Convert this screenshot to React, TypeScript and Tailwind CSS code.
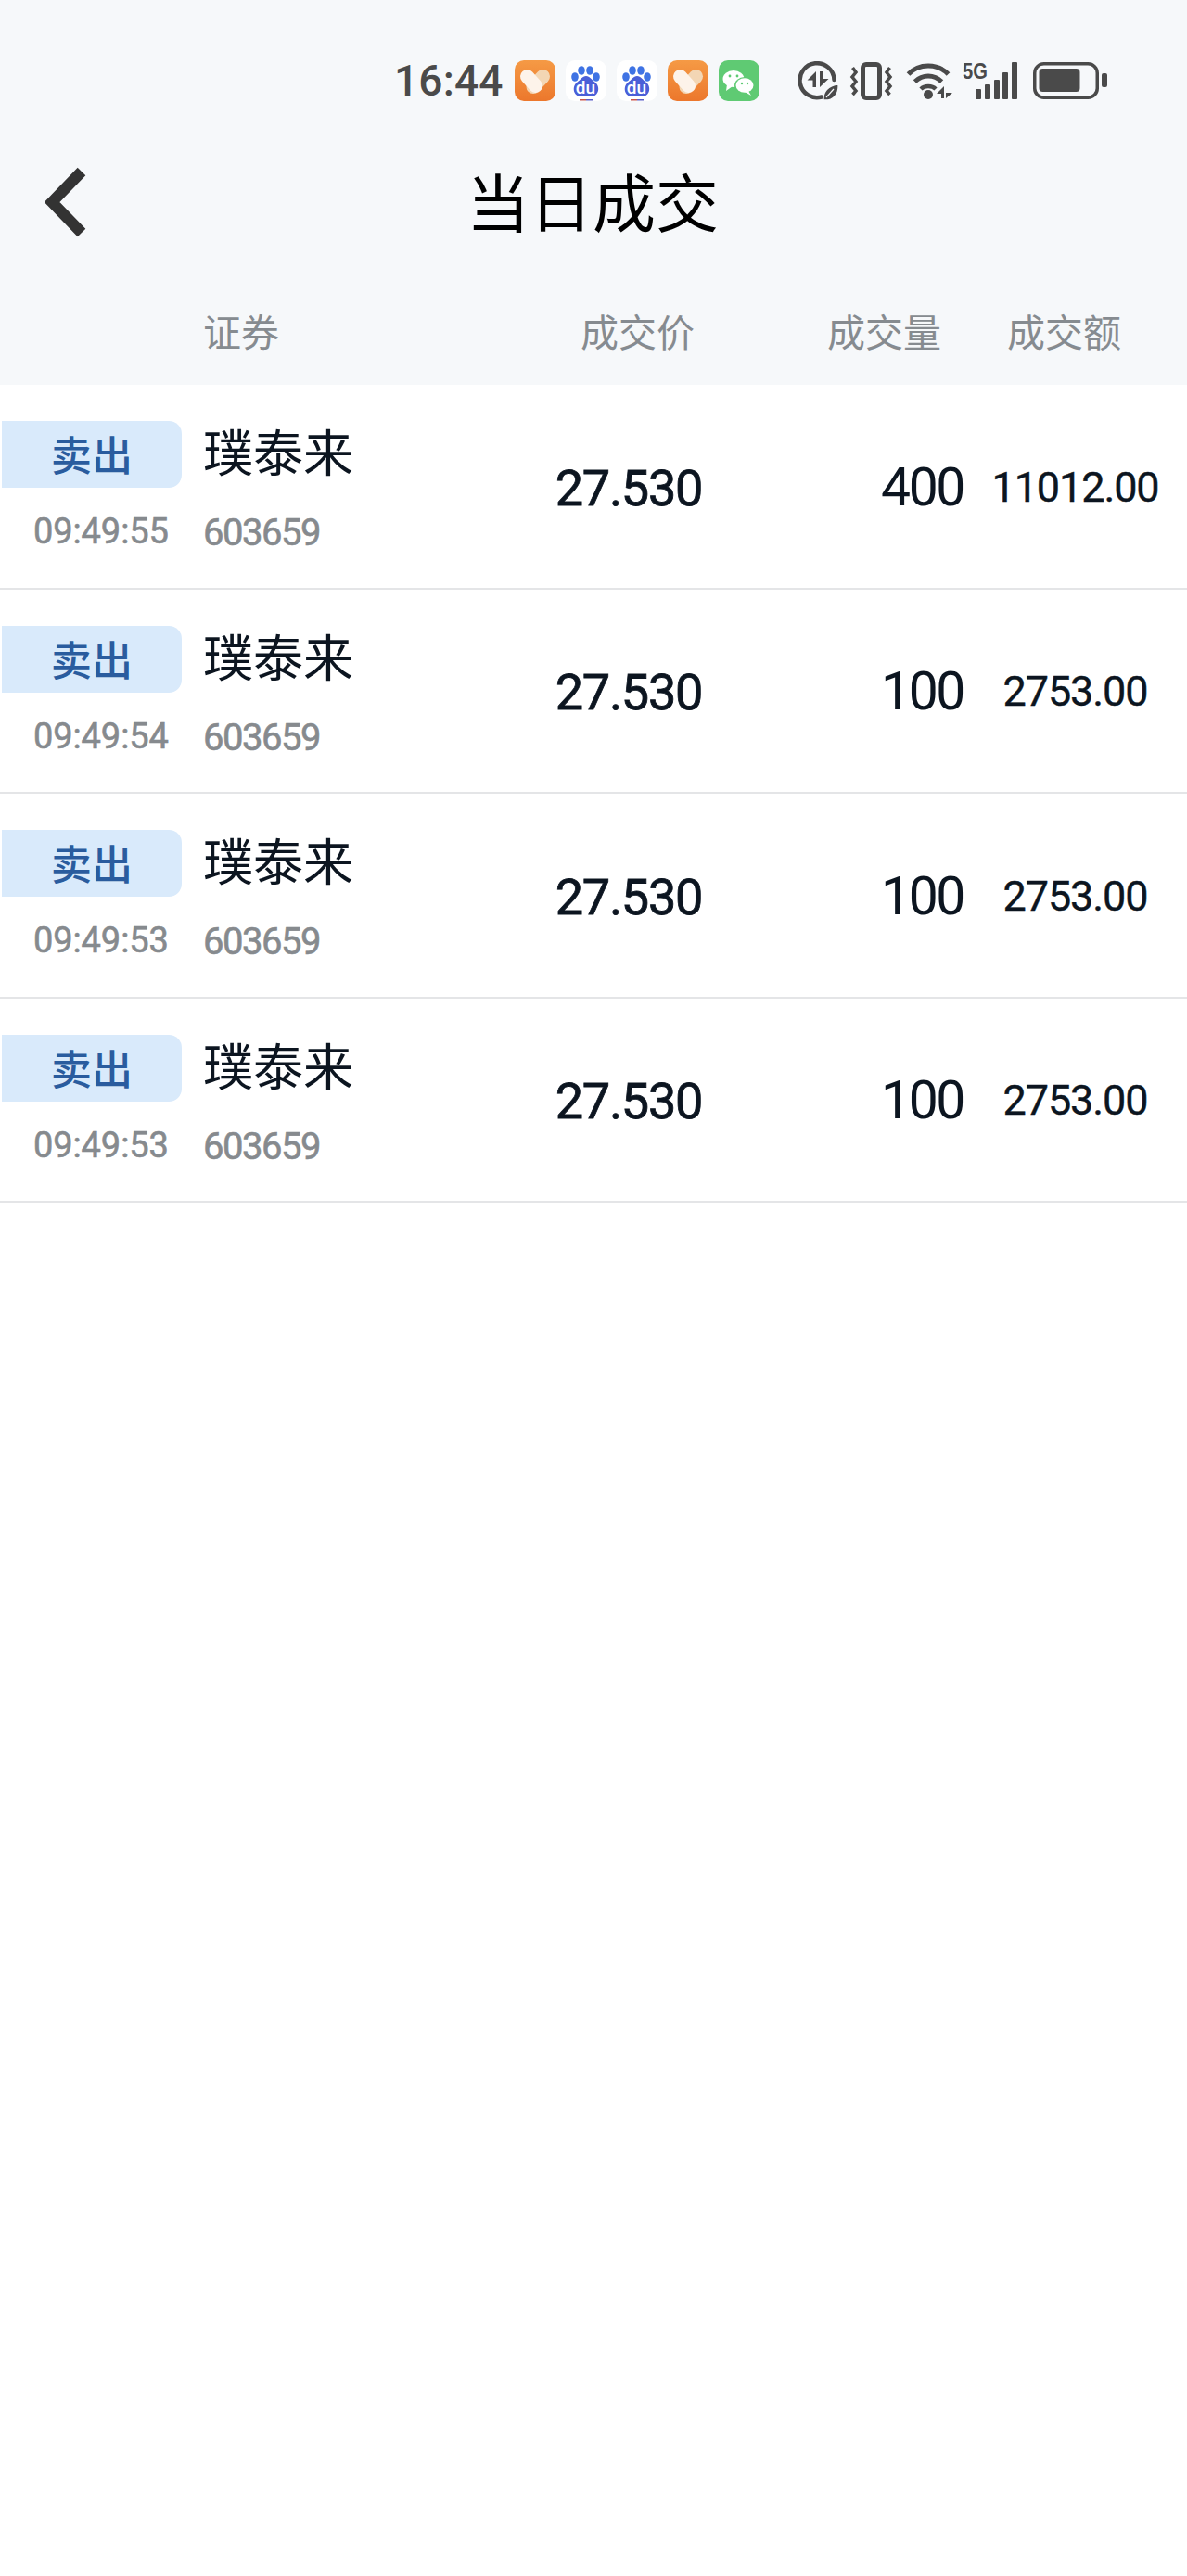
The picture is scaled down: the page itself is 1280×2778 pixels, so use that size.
const cjk = "font-['Noto_Sans_CJK_SC','Noto_Sans',sans-serif]";
const num = "font-['Roboto','Liberation_Sans',sans-serif]";

const trades = [
  { time: "09:49:55", qty: "400", amount: "11012.00" },
  { time: "09:49:54", qty: "100", amount: "2753.00" },
  { time: "09:49:53", qty: "100", amount: "2753.00" },
  { time: "09:49:53", qty: "100", amount: "2753.00" },
];

function HeartApp() {
  return (
    <svg width="44" height="44" viewBox="0 0 44 44" fill="none">
      <defs>
        <linearGradient id="orangeBg" x1="0" y1="0" x2="0" y2="1">
          <stop offset="0" stopColor="#f59a45" />
          <stop offset="1" stopColor="#ec772c" />
        </linearGradient>
      </defs>
      <rect width="44" height="44" rx="10" fill="url(#orangeBg)" />
      <path d="M30.500 17.500 L20 28.500" stroke="#f3d6b4" strokeWidth="15" strokeLinecap="round" />
      <path d="M13.500 17.500 L22.500 27.500" stroke="#fdf3ea" strokeWidth="15" strokeLinecap="round" />
    </svg>
  );
}

function BaiduApp() {
  return (
    <svg width="44" height="44" viewBox="0 0 44 44">
      <rect width="44" height="44" rx="10" fill="#ffffff" />
      <ellipse cx="17" cy="11" rx="3.800" ry="4.800" fill="#3f73e4" />
      <ellipse cx="26" cy="11" rx="3.800" ry="4.800" fill="#3f73e4" />
      <ellipse cx="10" cy="18" rx="3.800" ry="4.800" fill="#3f73e4" />
      <ellipse cx="33" cy="18" rx="3.800" ry="4.800" fill="#3f73e4" />
      <path d="M22 17 C26 17 28 21 32 24 C38 29 35 39 28 39 L16 39 C9 39 6 29 12 24 C16 21 18 17 22 17 Z" fill="#4a5fd8" />
      <text x="21.500" y="36" textAnchor="middle" fontSize="19" fontWeight="500" fill="#ffffff" fontFamily="Roboto, sans-serif">du</text>
      <rect x="15" y="42" width="7" height="1.500" fill="#c9544a" />
      <rect x="22" y="42" width="7" height="1.500" fill="#5a5fc8" />
    </svg>
  );
}

function WechatApp() {
  return (
    <svg width="44" height="44" viewBox="0 0 44 44">
      <rect width="44" height="44" rx="10" fill="#5fca73" />
      <ellipse cx="16" cy="20" rx="11.500" ry="9" fill="#ffffff" />
      <path d="M9 26 L8 33 L15 28 Z" fill="#ffffff" />
      <ellipse cx="28" cy="27" rx="11" ry="9" fill="#5fca73" />
      <ellipse cx="28" cy="27" rx="9.500" ry="7.800" fill="#ffffff" />
      <path d="M32 33 L35 38 L28 34 Z" fill="#ffffff" />
      <circle cx="12" cy="17" r="1.400" fill="#5fca73" />
      <circle cx="20" cy="17" r="1.400" fill="#5fca73" />
      <circle cx="25" cy="25" r="1.200" fill="#5fca73" />
      <circle cx="31" cy="25" r="1.200" fill="#5fca73" />
    </svg>
  );
}

function DataSaver() {
  return (
    <svg width="44" height="43" viewBox="0 0 44 43" fill="none">
      <path d="M25 38.500 A18.500 18.500 0 1 1 38.500 20" stroke="#4a4a4a" strokeWidth="4.500" strokeLinecap="round" />
      <path d="M19 11 V28 H15.500 V20.500 H9.500 Z" fill="#4a4a4a" />
      <path d="M23 11 H26.500 V19 H32.500 L23 28 Z" fill="#4a4a4a" />
      <path d="M27 42 C26 33 32 26 43 25 C44 35 38 43 27 42 Z" fill="#4a4a4a" stroke="#f6f8fa" strokeWidth="1.500" />
      <path d="M30 39 L38 30" stroke="#f6f8fa" strokeWidth="1.200" />
    </svg>
  );
}

function Vibrate() {
  return (
    <svg width="47" height="41" viewBox="0 0 47 41" fill="none" stroke="#4a4a4a">
      <rect x="14.500" y="2.500" width="18" height="36" rx="3.500" strokeWidth="5" />
      <path d="M3.500 6 L7 11 L3 16 L7 21 L3 26 L7 31 L3.500 35" strokeWidth="3.500" />
      <path d="M43.500 6 L40 11 L44 16 L40 21 L44 26 L40 31 L43.500 35" strokeWidth="3.500" />
    </svg>
  );
}

function Wifi() {
  return (
    <svg width="52" height="40" viewBox="0 0 52 40" fill="none">
      <path d="M2.500 13 C14 1 34 1 45.500 13" stroke="#4a4a4a" strokeWidth="5" />
      <path d="M9.500 21 C18 13 30 13 38.500 21" stroke="#4a4a4a" strokeWidth="5" />
      <path d="M16 29 C20 25 28 25 32 29" stroke="#4a4a4a" strokeWidth="4.500" />
      <circle cx="24" cy="35" r="5" fill="#4a4a4a" />
      <path d="M41 26 V39 H38 V34 H33 Z" fill="#4a4a4a" />
      <path d="M43 26 V39 L50 33 H43 Z" fill="#4a4a4a" />
    </svg>
  );
}

function Signal() {
  return (
    <div className="relative h-[40px] w-[60px]">
      <span className="absolute left-0 top-[-2px] origin-left scale-x-[0.84] font-['Liberation_Sans',sans-serif] text-[24px] font-bold leading-none text-[#4a4a4a]">
        5G
      </span>
      <svg className="absolute left-0 top-0" width="60" height="40" viewBox="0 0 60 40" fill="#4a4a4a">
        <rect x="14" y="29" width="6" height="11" rx="1" />
        <rect x="24" y="24" width="6" height="16" rx="1" />
        <rect x="34" y="19" width="6" height="21" rx="1" />
        <rect x="43" y="11" width="6" height="29" rx="1" />
        <rect x="53" y="0" width="6" height="40" rx="1" />
      </svg>
    </div>
  );
}

function Battery() {
  return (
    <svg width="80" height="40" viewBox="0 0 80 40" fill="none">
      <rect x="1.750" y="1.750" width="67.500" height="36.500" rx="10" stroke="#4a4a4a" strokeWidth="3.500" />
      <rect x="6.500" y="7" width="44" height="25" rx="4" fill="#4a4a4a" />
      <rect x="74" y="12" width="6" height="15" rx="2" fill="#4a4a4a" />
    </svg>
  );
}

function StatusBar() {
  return (
    <div className="flex h-[174px] items-center pl-[425px]">
      <span className={`${num} w-[130px] text-[46px] font-medium leading-none tracking-[0.2px] text-[#4a4a4a]`}>16:44</span>
      <div className="flex items-center gap-[11px]">
        <HeartApp />
        <BaiduApp />
        <BaiduApp />
        <HeartApp />
        <WechatApp />
      </div>
      <div className="ml-[42px] flex items-center">
        <DataSaver />
        <div className="ml-[11px]"><Vibrate /></div>
        <div className="ml-[14px]"><Wifi /></div>
        <div className="ml-[9px]"><Signal /></div>
        <div className="ml-[16px]"><Battery /></div>
      </div>
    </div>
  );
}

function Header() {
  return (
    <div className="h-[415px] bg-[#f6f8fa]">
      <StatusBar />
      <div className="grid h-[88px] grid-cols-[1fr_auto_1fr] items-center">
        <div className="pl-[48px]">
          <svg width="46" height="76" viewBox="0 0 46 76" fill="none">
            <path d="M40 5 L8 38 L40 71" stroke="#333333" strokeWidth="12" />
          </svg>
        </div>
        <div className={`${cjk} -translate-x-[1px] -translate-y-[2px] text-[68px] leading-none text-black`}>当日成交</div>
        <div />
      </div>
      <div className={`${cjk} flex h-[153px] items-center pl-[219px] pt-[36px] text-[41px] leading-none text-[#868b90]`}>
        <div className="w-[407px]">证券</div>
        <div className="w-[266px]">成交价</div>
        <div className="w-[194px]">成交量</div>
        <div>成交额</div>
      </div>
    </div>
  );
}

function TradeRow({ time, qty, amount }: { time: string; qty: string; amount: string }) {
  return (
    <div className="flex h-[220.5px] items-center border-b-2 border-[#e4e5e7]">
      <div className="flex h-full w-[219px] flex-col pl-[2px] pt-[39px]">
        <div className={`${cjk} flex h-[72px] w-[194px] items-center justify-center rounded-r-[14px] bg-[#d9eafb] pb-[2px] text-[44px] font-medium leading-none text-[#2a5c9e]`}>
          卖出
        </div>
        <div className={`${num} mt-[28px] pl-[34px] text-[38px] leading-[38px] tracking-[-0.1px] text-[#868a8e] [-webkit-text-stroke:0.6px_#868a8e]`}>{time}</div>
      </div>
      <div className="flex h-full w-[301px] flex-col pt-[40px]">
        <div className={`${cjk} text-[54px] leading-[62px] text-[#0c1520]`}>璞泰来</div>
        <div className={`${num} mt-[38px] text-[40px] leading-[40px] tracking-[-1.5px] text-[#868a8e] [-webkit-text-stroke:0.6px_#868a8e]`}>603659</div>
      </div>
      <div className={`${num} w-[237px] pt-[4px] text-right text-[54px] tracking-[-1.3px] text-[#0c1520] [-webkit-text-stroke:0.8px_#0c1520]`}>27.530</div>
      <div className={`${num} w-[282px] pt-[2px] text-right text-[57px] tracking-[-2.400px] text-[#0c1520]`}>{qty}</div>
      <div className={`${num} flex-1 pt-[2px] text-center text-[45px] tracking-[-1.1px] text-[#0c1520] [-webkit-text-stroke:0.4px_#0c1520]`}>{amount}</div>
    </div>
  );
}

export default function App() {
  return (
    <div className="min-h-[2778px] bg-white">
      <Header />
      {trades.map((t, i) => (
        <TradeRow key={i} time={t.time} qty={t.qty} amount={t.amount} />
      ))}
    </div>
  );
}
